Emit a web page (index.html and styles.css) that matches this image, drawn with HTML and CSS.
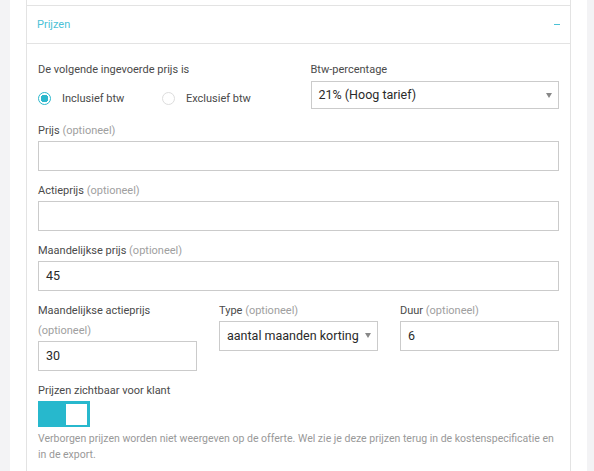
FILE: index.html
```html
<!DOCTYPE html>
<html lang="nl">
<head>
  <meta charset="UTF-8">
  <title>Prijzen</title>
  <link rel="stylesheet" href="styles.css">
</head>
<body>

<div class="panel">
  <div class="card">
    <div class="card-prev"></div>

    <div class="section-head">
      <span class="section-title">Prijzen</span>
      <span class="section-toggle"></span>
    </div>

    <div class="section-body">
      <div class="grid-2">
        <div class="field">
          <label class="label">De volgende ingevoerde prijs is</label>
          <div class="radios">
            <span class="radio radio-on"><i></i>Inclusief btw</span>
            <span class="radio"><i></i>Exclusief btw</span>
          </div>
        </div>
        <div class="field">
          <label class="label">Btw-percentage</label>
          <div class="input select">21% (Hoog tarief)</div>
        </div>
      </div>

      <div class="field">
        <label class="label">Prijs <span class="opt">(optioneel)</span></label>
        <div class="input"></div>
      </div>

      <div class="field">
        <label class="label">Actieprijs <span class="opt">(optioneel)</span></label>
        <div class="input"></div>
      </div>

      <div class="field">
        <label class="label">Maandelijkse prijs <span class="opt">(optioneel)</span></label>
        <div class="input">45</div>
      </div>

      <div class="grid-3">
        <div class="field">
          <label class="label">Maandelijkse actieprijs <span class="opt">(optioneel)</span></label>
          <div class="input">30</div>
        </div>
        <div class="field">
          <label class="label">Type <span class="opt">(optioneel)</span></label>
          <div class="input select">aantal maanden korting</div>
        </div>
        <div class="field">
          <label class="label">Duur <span class="opt">(optioneel)</span></label>
          <div class="input">6</div>
        </div>
      </div>

      <div class="field">
        <label class="label">Prijzen zichtbaar voor klant</label>
        <div class="switch"><span class="knob"></span></div>
        <p class="help">Verborgen prijzen worden niet weergeven op de offerte. Wel zie je deze prijzen terug in de kostenspecificatie en in de export.</p>
      </div>
    </div>
  </div>
</div>

</body>
</html>
```

FILE: styles.css
```css
body {
  margin: 0;
  background: #f3f3f5;
  color: #333;
  font-family: Roboto, "Noto Sans", sans-serif;
  overflow: hidden;
}

.panel {
  margin: 0 7px 0 10px;
  padding: 0 16px;
  background: #fff;
  min-height: 471px;
}

.card {
  border-left: 1px solid #e3e3e3;
  border-right: 1px solid #e3e3e3;
  min-height: 471px;
}

.card-prev {
  height: 5px;
  border-bottom: 1px solid #e3e3e3;
}

.section-head {
  display: flex;
  align-items: center;
  justify-content: space-between;
  height: 37px;
  padding: 0 10px;
  border-bottom: 1px solid #e3e3e3;
}

.section-title {
  font-size: 11px;
  color: #4cc2d6;
}

.section-toggle {
  width: 6px;
  height: 1.5px;
  background: #4cc2d6;
}

.section-body {
  padding: 16px 11px 0 11px;
}

.grid-2 {
  display: grid;
  grid-template-columns: repeat(2, minmax(0, 1fr));
  column-gap: 24px;
}

.grid-3 {
  display: grid;
  grid-template-columns: repeat(3, minmax(0, 1fr));
  column-gap: 22px;
  align-items: start;
}

.field {
  margin-bottom: 10px;
}

.label {
  display: block;
  font-size: 11px;
  line-height: 20px;
  color: #4a4a4a;
}

.opt {
  color: #a0a0a0;
}

.input {
  box-sizing: border-box;
  height: 30px;
  border: 1px solid #cbcbcb;
  padding: 0 7px;
  font-size: 12.5px;
  line-height: 28px;
  color: #2a2a2a;
  white-space: nowrap;
  overflow: hidden;
}

.grid-2 .input {
  height: 28px;
  line-height: 26px;
  margin-top: 1px;
}

.select {
  position: relative;
  padding-right: 16px;
}

.select::after {
  content: "";
  position: absolute;
  right: 6px;
  top: 11px;
  border-left: 3.5px solid transparent;
  border-right: 3.5px solid transparent;
  border-top: 5px solid #888;
}

.radios {
  display: flex;
  align-items: center;
  height: 26px;
  padding-top: 5px;
}

.radio {
  display: flex;
  align-items: center;
  font-size: 11px;
  color: #4a4a4a;
  width: 124px;
}

.radio i {
  box-sizing: border-box;
  width: 13px;
  height: 13px;
  border: 1px solid #ddd;
  border-radius: 50%;
  margin-right: 11px;
}

.radio-on i {
  border: 1.5px solid #2cb8cd;
  background: radial-gradient(circle, #2cb8cd 0 3.6px, #fff 4px);
}

.switch {
  display: flex;
  justify-content: flex-end;
  align-items: center;
  box-sizing: border-box;
  width: 52px;
  height: 26px;
  padding: 2px 3px;
  background: #27b8cd;
}

.knob {
  width: 21px;
  height: 21px;
  background: #fff;
}

.help {
  margin: 4px 0 0;
  font-size: 10.5px;
  line-height: 16px;
  color: #999;
}
```
